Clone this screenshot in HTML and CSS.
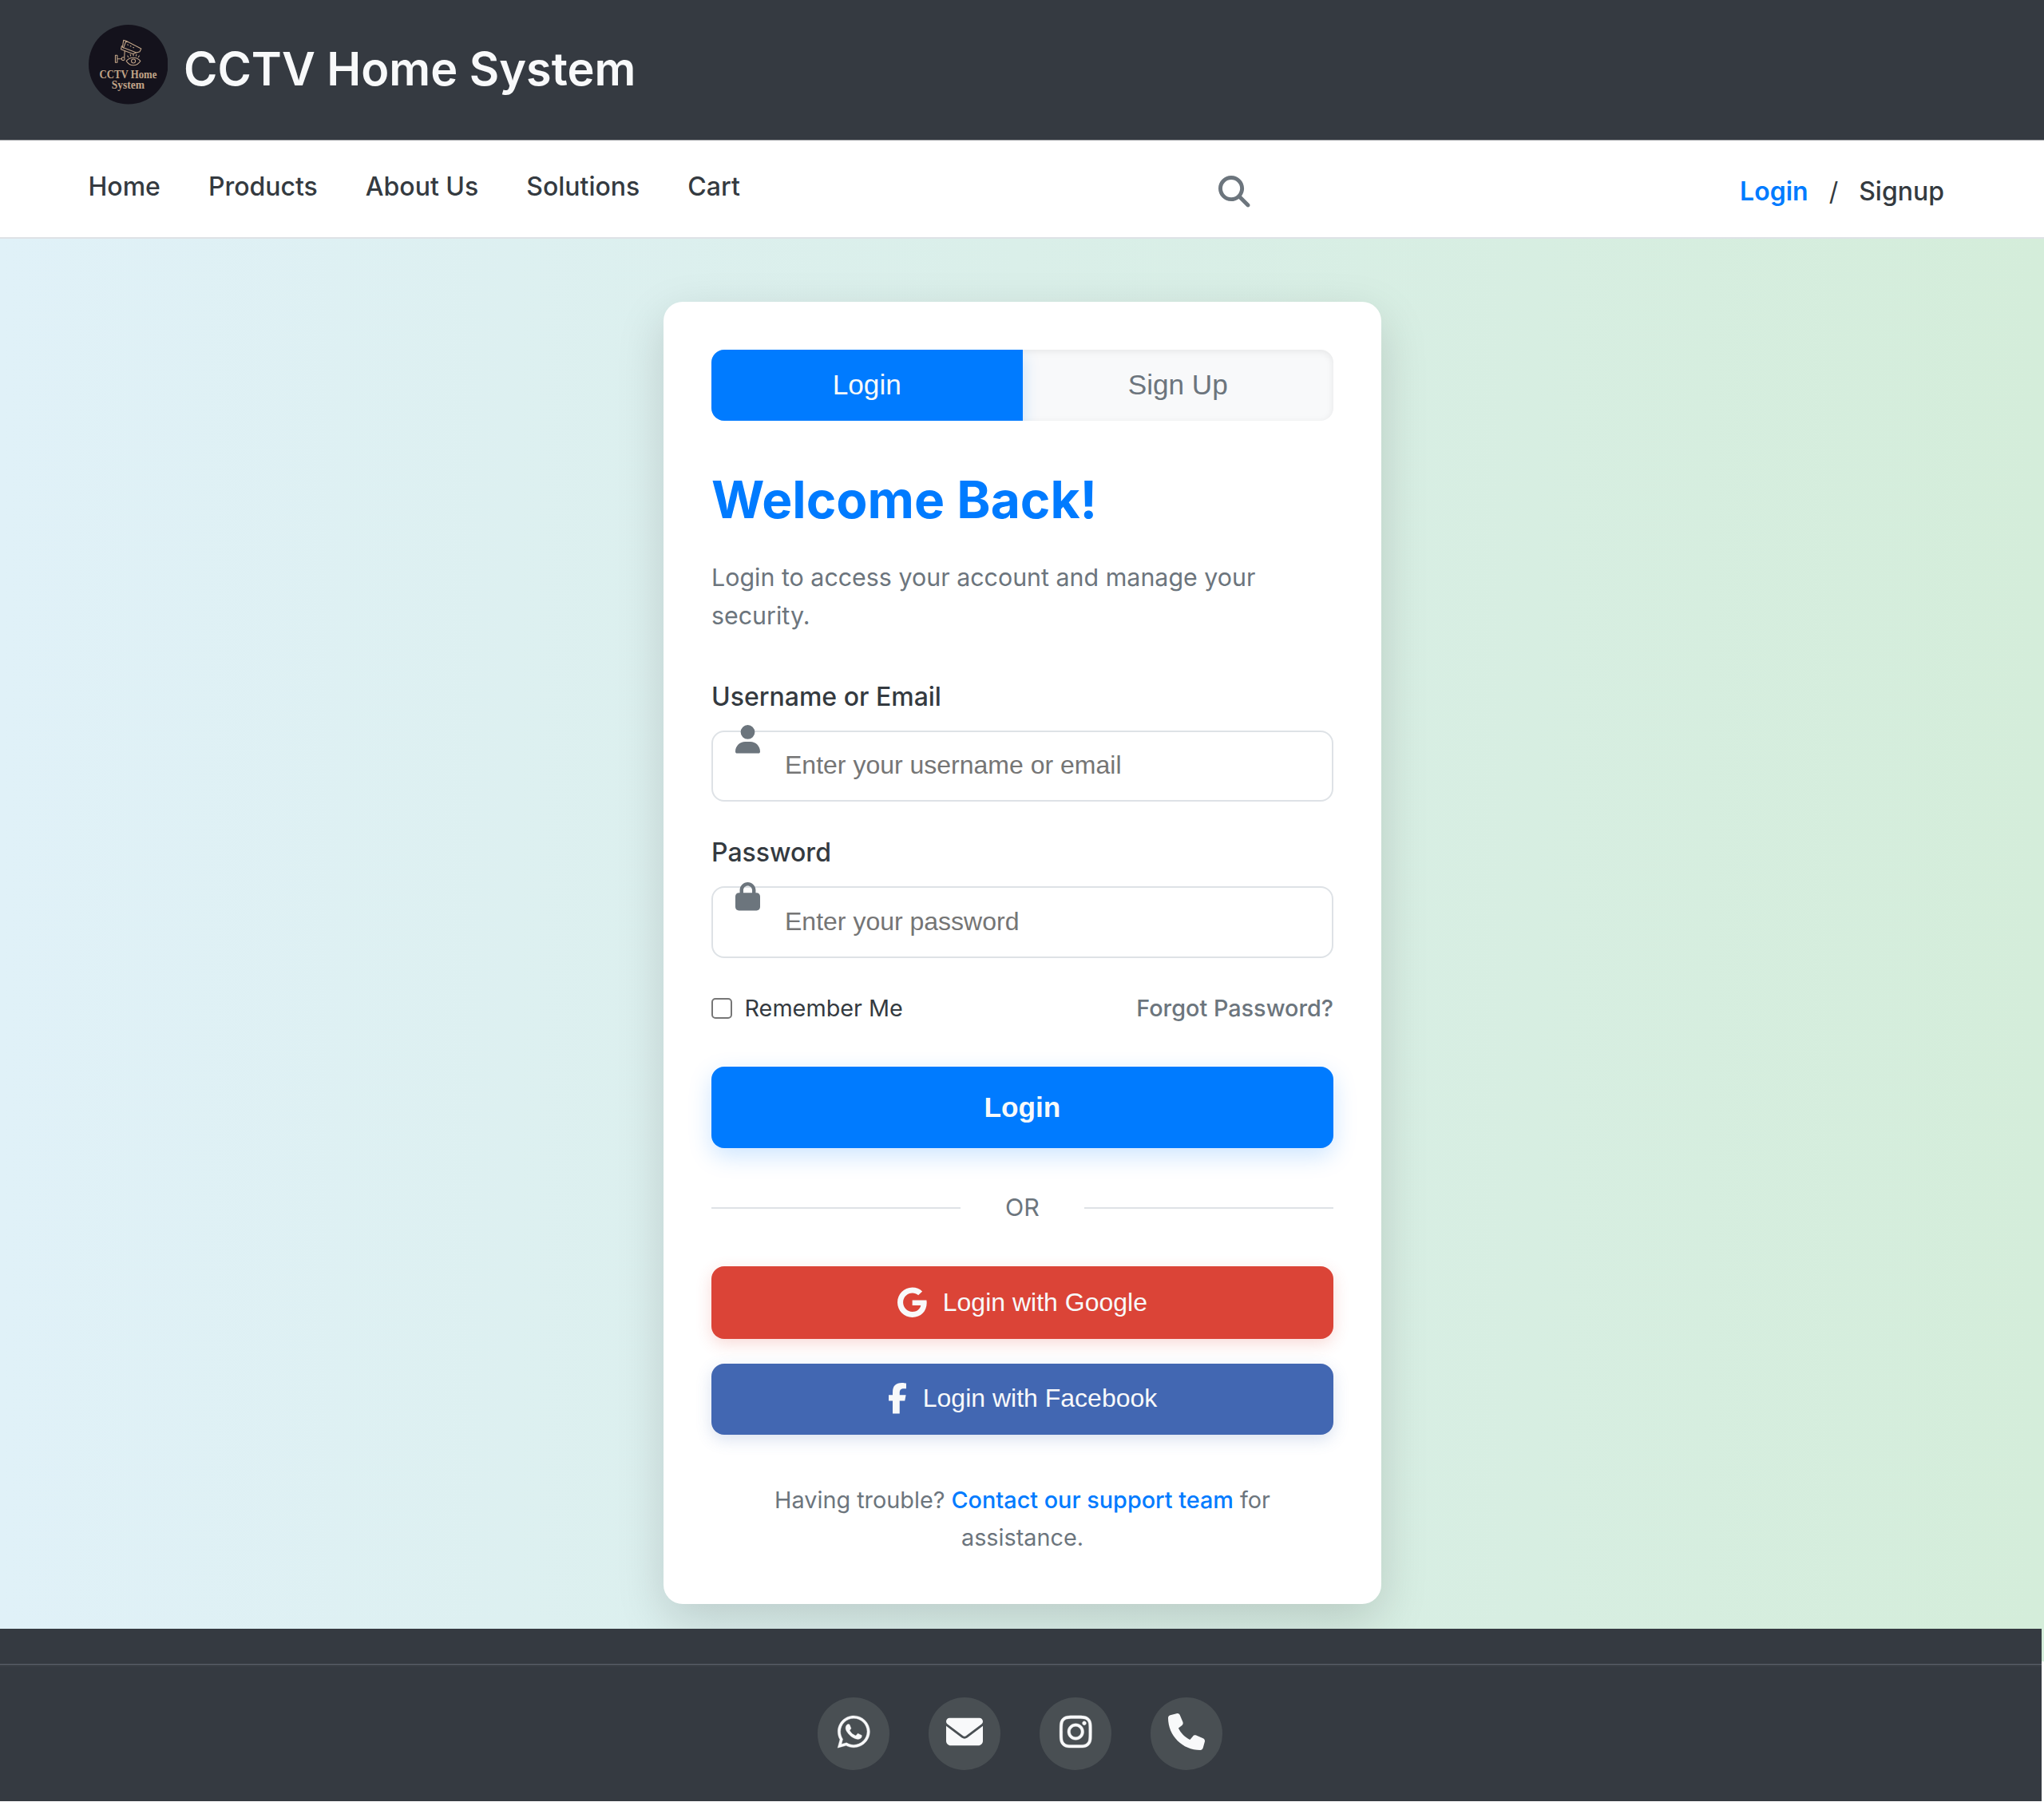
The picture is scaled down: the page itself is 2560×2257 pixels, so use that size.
FILE: index.html
```html
<!DOCTYPE html>
<html lang="en">
<head>
<meta charset="utf-8">
<title>CCTV Home System</title>
<link rel="stylesheet" href="styles.css">
</head>
<body>
<header class="site-header">
  <svg class="logo" viewBox="0 0 99 99">
    <circle cx="49.5" cy="49.5" r="49.5" fill="#14121c"/>
    <g fill="none" stroke="#c2a588" stroke-width="1.1" stroke-linejoin="round" stroke-linecap="round">
      <path d="M43.500 19.300l3.200.9 18.800 9.600-1.800 3.700-4 1.300-17.500-6.800z M46.700 20.200l-3.300 8.800 M41.200 26.500l-.8 4 14.600 5.800 5-1.700 M45 32.500l-.5 8"/>
      <path d="M48.500 24.800l.8.300M52 26.500l.8.300M55.500 28.300l.8.300"/>
      <path d="M33.300 38v9h2.400v-9zM35.700 42.500h5.300"/>
      <circle cx="43" cy="42.500" r="1.900"/>
      <path d="M47 45.200c4.500-5.600 13-5.600 17.500 0-4.500 7-13 7-17.500 0z"/>
      <circle cx="55.800" cy="45.300" r="2.500"/>
      <path d="M49.500 40.300l-1-1.500M52.500 38.900l-.6-1.800M55.800 38.500v-2M59 38.900l.6-1.800M62 40.300l1-1.500"/>
    </g>
    <g class="logo-text">
      <text x="13.500" y="66.500" textLength="71.500" lengthAdjust="spacingAndGlyphs">CCTV Home</text>
      <text x="28.700" y="80" textLength="41" lengthAdjust="spacingAndGlyphs">System</text>
    </g>
  </svg>
  <h1 class="brand">CCTV Home System</h1>
</header>

<nav class="navbar">
  <div class="links">
    <a>Home</a><a>Products</a><a>About Us</a><a>Solutions</a><a>Cart</a>
  </div>
  <svg class="search" viewBox="0 0 512 512"><path d="M416 208c0 45.900-14.900 88.300-40 122.700L502.600 457.400c12.500 12.500 12.500 32.800 0 45.300s-32.800 12.500-45.300 0L330.700 376c-34.400 25.200-76.800 40-122.700 40C93.100 416 0 322.900 0 208S93.100 0 208 0S416 93.100 416 208zM208 352a144 144 0 1 0 0-288 144 144 0 1 0 0 288z"/></svg>
  <div class="auth"><a class="active">Login</a><span>/</span><a>Signup</a></div>
</nav>

<main class="page">
  <section class="card">
    <div class="tabs">
      <button class="tab tab-active">Login</button>
      <button class="tab">Sign Up</button>
    </div>
    <h2 class="title">Welcome Back!</h2>
    <p class="lead">Login to access your account and manage your security.</p>

    <label class="label" for="user">Username or Email</label>
    <div class="field">
      <svg class="field-icon" viewBox="0 0 448 512"><path d="M224 256A128 128 0 1 0 224 0a128 128 0 1 0 0 256zm-45.700 48C79.800 304 0 383.800 0 482.300C0 498.700 13.300 512 29.700 512H418.300c16.400 0 29.700-13.300 29.700-29.700C448 383.800 368.200 304 269.700 304H178.300z"/></svg>
      <input id="user" type="text" placeholder="Enter your username or email">
    </div>
    <label class="label" for="pass">Password</label>
    <div class="field">
      <svg class="field-icon" viewBox="0 0 448 512"><path d="M144 144v48H304V144c0-44.200-35.800-80-80-80s-80 35.800-80 80zM80 192V144C80 64.500 144.500 0 224 0s144 64.500 144 144v48h16c35.300 0 64 28.700 64 64V448c0 35.300-28.700 64-64 64H64c-35.300 0-64-28.700-64-64V256c0-35.300 28.700-64 64-64H80z"/></svg>
      <input id="pass" type="password" placeholder="Enter your password">
    </div>

    <div class="options">
      <label class="remember"><span class="checkbox"></span>Remember Me</label>
      <a class="forgot">Forgot Password?</a>
    </div>

    <button class="submit">Login</button>
    <div class="divider">OR</div>

    <button class="social google">
      <svg viewBox="0 0 488 512"><path d="M488 261.800C488 403.300 391.100 504 248 504 110.800 504 0 393.200 0 256S110.800 8 248 8c66.800 0 123 24.500 166.300 64.900l-67.500 64.900C258.500 52.600 94.300 116.600 94.300 256c0 86.500 69.100 156.600 153.700 156.600 98.200 0 135-70.400 140.800-106.900H248v-85.300h236.100c2.300 12.700 3.900 24.900 3.900 41.400z"/></svg>
      Login with Google
    </button>
    <button class="social facebook">
      <svg viewBox="0 0 320 512"><path d="M80 299.300V512H196V299.300h86.500l18-97.800H196V166.900c0-51.700 20.300-71.500 72.700-71.500c16.300 0 29.400 .4 37 1.200V7.900C291.400 4 256.400 0 236.200 0C129.300 0 80 50.500 80 159.400v42.100H14v97.800H80z"/></svg>
      Login with Facebook
    </button>

    <p class="help">Having trouble? <a>Contact our support team</a> for assistance.</p>
  </section>
</main>

<footer class="footer">
  <div class="contacts">
    <a><svg class="narrow" viewBox="0 0 448 512"><path d="M380.900 97.100C339 55.100 283.200 32 223.900 32c-122.400 0-222 99.600-222 222 0 39.100 10.200 77.300 29.600 111L0 480l117.700-30.900c32.400 17.700 68.900 27 106.100 27h.1c122.300 0 224.100-99.600 224.100-222 0-59.300-25.200-115-67.100-157zm-157 341.600c-33.200 0-65.700-8.900-94-25.700l-6.700-4-69.800 18.300L72 359.200l-4.400-7c-18.500-29.400-28.200-63.300-28.200-98.200 0-101.700 82.800-184.500 184.600-184.500 49.300 0 95.600 19.200 130.400 54.100 34.800 34.900 56.200 81.200 56.100 130.500 0 101.800-84.900 184.600-186.600 184.600zm101.200-138.200c-5.500-2.800-32.800-16.200-37.900-18-5.100-1.900-8.800-2.800-12.500 2.800-3.700 5.600-14.300 18-17.600 21.800-3.200 3.700-6.500 4.200-12 1.400-32.600-16.300-54-29.100-75.500-66-5.700-9.800 5.700-9.100 16.300-30.300 1.800-3.700.9-6.900-.5-9.700-1.400-2.800-12.500-30.100-17.100-41.200-4.500-10.800-9.100-9.300-12.500-9.500-3.200-.2-6.900-.2-10.600-.2-3.700 0-9.700 1.400-14.800 6.900-5.100 5.600-19.400 19-19.400 46.300 0 27.300 19.900 53.700 22.600 57.400 2.800 3.700 39.100 59.700 94.800 83.800 35.200 15.200 49 16.500 66.600 13.900 10.700-1.600 32.800-13.400 37.400-26.400 4.600-13 4.600-24.100 3.200-26.400-1.300-2.500-5-3.900-10.500-6.600z"/></svg></a>
    <a><svg viewBox="0 0 512 512"><path d="M48 64C21.500 64 0 85.500 0 112c0 15.100 7.100 29.300 19.200 38.400L236.800 313.600c11.400 8.500 27 8.500 38.400 0L492.800 150.400c12.100-9.100 19.200-23.300 19.200-38.400c0-26.500-21.500-48-48-48H48zM0 176V384c0 35.300 28.700 64 64 64H448c35.300 0 64-28.700 64-64V176L294.400 339.200c-22.800 17.100-54 17.100-76.800 0L0 176z"/></svg></a>
    <a><svg class="narrow" viewBox="0 0 448 512"><path d="M224.100 141c-63.600 0-114.900 51.300-114.900 114.900s51.300 114.900 114.900 114.900S339 319.500 339 255.900 287.700 141 224.100 141zm0 189.600c-41.100 0-74.700-33.500-74.700-74.700s33.500-74.700 74.700-74.700 74.700 33.500 74.700 74.700-33.600 74.700-74.700 74.700zm146.400-194.300c0 14.900-12 26.800-26.800 26.800-14.900 0-26.800-12-26.800-26.800s12-26.800 26.800-26.800 26.800 12 26.800 26.800zm76.100 27.200c-1.700-35.900-9.900-67.700-36.200-93.900-26.200-26.200-58-34.400-93.900-36.200-37-2.100-147.900-2.100-184.900 0-35.800 1.700-67.600 9.900-93.900 36.100s-34.400 58-36.200 93.900c-2.100 37-2.100 147.900 0 184.900 1.700 35.900 9.900 67.700 36.200 93.900s58 34.400 93.900 36.200c37 2.100 147.900 2.100 184.900 0 35.900-1.700 67.700-9.900 93.900-36.200 26.200-26.200 34.400-58 36.200-93.900 2.100-37 2.100-147.800 0-184.800zM398.800 388c-7.800 19.600-22.900 34.700-42.600 42.600-29.500 11.700-99.500 9-132.100 9s-102.700 2.600-132.100-9c-19.600-7.800-34.700-22.900-42.600-42.600-11.700-29.500-9-99.500-9-132.100s-2.600-102.700 9-132.100c7.800-19.600 22.900-34.700 42.600-42.600 29.500-11.700 99.500-9 132.100-9s102.700-2.600 132.100 9c19.600 7.800 34.700 22.900 42.600 42.600 11.700 29.500 9 99.500 9 132.100s2.700 102.700-9 132.100z"/></svg></a>
    <a><svg viewBox="0 0 512 512"><path d="M164.900 24.600c-7.700-18.600-28-28.500-47.400-23.200l-88 24C12.100 30.200 0 46 0 64C0 311.400 200.600 512 448 512c18 0 33.800-12.100 38.600-29.500l24-88c5.300-19.400-4.600-39.700-23.200-47.400l-96-40c-16.300-6.800-35.200-2.100-46.300 11.600L304.700 368C234.300 334.700 177.300 277.700 144 207.300L193.300 167c13.700-11.200 18.400-30 11.600-46.300l-40-96z"/></svg></a>
  </div>
</footer>
</body>
</html>
```
FILE: styles.css
```css
* { box-sizing: border-box; }
body {
  margin: 0;
  width: 2560px;
  font-family: Inter, sans-serif;
  font-size: 32px;
  line-height: 51px;
  color: #343a40;
  background: #fff;
}
h1, h2, p { margin: 0; }
button, input { font-family: "Liberation Sans", sans-serif; border: 0; margin: 0; padding: 0; display: block; }

.site-header {
  display: flex;
  align-items: flex-start;
  gap: 20px;
  height: 175px;
  padding: 31px 110px 0 110.500px;
  background: #353a41;
}
.logo { width: 99.500px; height: 99.500px; flex: none; }
.logo-text { font: bold 14px "Liberation Serif", serif; fill: #c2a588; }
.brand { margin-top: 9px; font-size: 57.600px; font-weight: 600; line-height: 92px; color: #f8f9fa; }

.navbar {
  display: grid;
  grid-template-columns: 1415.500px 1fr auto;
  align-items: start;
  height: 124px;
  padding: 0 125px 0 110.500px;
  background: #fff;
  border-top: 1px solid #9a9ca0;
  border-bottom: 2px solid #dee2e6;
  font-weight: 500;
}
.links { display: flex; gap: 60px; padding-top: 32px; }
.search { width: 39.500px; height: 39.500px; margin-top: 44px; fill: #6c757d; }
.auth { display: flex; padding-top: 38px; gap: 26px; }
.auth .active { color: #007bff; font-weight: 600; }
.auth span { font-weight: 400; }

.page {
  display: flex;
  justify-content: center;
  height: 1782px;
  padding: 79px 0 0 1px;
  margin-bottom: -41px;
  background: linear-gradient(to right, #e0f1f8, #d4edda);
}
.card {
  width: 899px;
  height: 1631px;
  padding: 60px;
  background: #fff;
  border-radius: 24px;
  box-shadow: 0 20px 60px rgba(0, 0, 0, .15);
}
.tabs {
  display: flex;
  height: 89px;
  border-radius: 16px;
  overflow: hidden;
  background: #f8f9fa;
  box-shadow: inset 0 2px 10px rgba(0, 0, 0, .08);
}
.tab { flex: 1; padding-bottom: 2px; background: transparent; font-size: 35.200px; color: #6c757d; }
.tab-active { background: #007bff; color: #f8f9fa; box-shadow: 0 8px 20px rgba(0, 123, 255, .2); }
.title { margin-top: 48px; font-size: 64px; line-height: 102px; font-weight: 700; color: #007bff; }
.lead { margin: 22px 0 52px; font-size: 30.400px; line-height: 48px; color: #6c757d; }
.label { display: block; font-weight: 500; margin-bottom: 17px; }
.field { position: relative; margin-bottom: 38px; }
.field-icon { position: absolute; left: 29.500px; top: -7px; width: 31px; height: 35.500px; fill: #6c757d; }
.field input {
  width: 100%;
  height: 89px;
  padding: 0 30px 3px 90px;
  border: 2px solid #dee2e6;
  border-radius: 16px;
  background: #fff;
  font-size: 32px;
}
.field + .label + .field { margin-bottom: 40px; }
.field + .label + .field .field-icon { top: -5px; }
.field + .label + .field input { height: 90px; padding-bottom: 2px; }
.field input::placeholder { color: #757575; }
.options { display: flex; justify-content: space-between; font-size: 28.800px; line-height: 46px; }
.remember { display: flex; align-items: center; gap: 16px; }
.checkbox { width: 26px; height: 26px; margin-left: -.5px; border: 2px solid #767676; border-radius: 5px; }
.forgot { color: #6c757d; font-weight: 500; }
.submit {
  width: 100%;
  height: 102px;
  margin-top: 50px;
  border-radius: 16px;
  background: #007bff;
  color: #f8f9fa;
  font-size: 35.200px;
  font-weight: 700;
  box-shadow: 0 10px 30px rgba(0, 123, 255, .2);
}
.divider {
  display: flex;
  align-items: center;
  justify-content: space-between;
  margin: 50px 0;
  font-size: 30.400px;
  line-height: 48px;
  color: #6c757d;
}
.divider::before, .divider::after { content: ""; width: 312px; height: 2px; margin-top: 2px; background: #dee2e6; }
.social {
  display: flex;
  align-items: center;
  justify-content: center;
  gap: 20px;
  width: 100%;
  height: 91px;
  border-radius: 16px;
  font-size: 32px;
  color: #f8f9fa;
}
.social svg { height: 38.500px; fill: #f8f9fa; }
.google { background: #db4437; box-shadow: 0 6px 20px rgba(219, 68, 55, .2); }
.facebook { height: 89px; margin-top: 31px; padding-bottom: 2px; background: #4267b2; box-shadow: 0 6px 20px rgba(66, 103, 178, .2); }
.help { margin-top: 59px; padding: 0 40px; font-size: 28.800px; line-height: 46.500px; text-align: center; color: #6c757d; }
.help a { color: #007bff; font-weight: 500; }

.footer { position: relative; width: 2557px; height: 216px; padding-top: 44px; background: #353a41; }
.contacts {
  display: flex;
  justify-content: center;
  gap: 48.500px;
  padding: 41px 2px 0 0;
  border-top: 1px solid #5c616b;
  box-shadow: inset 0 2px #3c4148;
}
.contacts a {
  display: flex;
  justify-content: center;
  width: 90.500px;
  height: 90.500px;
  padding-top: 20px;
  border-radius: 50%;
  background: #494f53;
}
.contacts svg { width: 46px; height: 46px; fill: #f8f9fa; }
.contacts .narrow { width: 40.500px; overflow: visible; stroke: #f8f9fa; stroke-width: 4; }
```
